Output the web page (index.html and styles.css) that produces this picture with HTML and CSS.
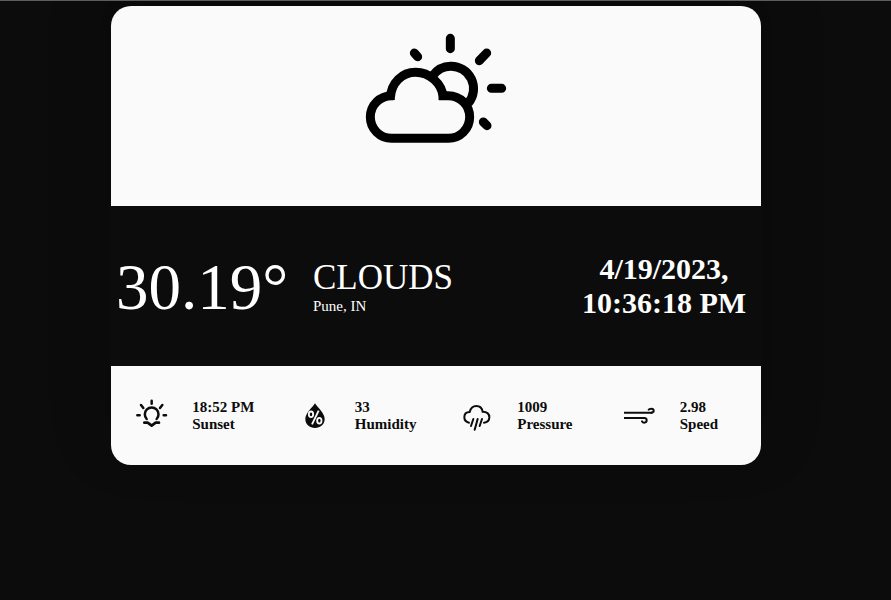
FILE: index.html
```html
<!DOCTYPE html>
<html lang="en">
<head>
<meta charset="utf-8">
<title>Weather</title>
<link rel="stylesheet" href="styles.css">
</head>
<body>
<article class="widget">
  <div class="weather-icon">
    <svg width="170" height="140" viewBox="0 0 510 420" fill="none" stroke="#000" stroke-width="27">
      <path d="M250 165A67 67 0 0 1 301 139A67 67 0 0 1 355 249"/>
      <path d="M131 227H125A64 64 0 0 0 125 355H295A64 64 0 0 0 295 227H267"/>
      <path d="M121 240V233C124 188 156 157 197 157S276 190 279 230V240"/>
      <path stroke-linecap="round" d="M301 55V86M388 122L410 99M424 205H455M193 99L203 110M400 306L411 317"/>
    </svg>
  </div>
  <div class="weather-info">
    <div class="temperature">30.19°</div>
    <div class="description">
      <div class="condition">CLOUDS</div>
      <div class="place">Pune, IN</div>
    </div>
    <div class="date">4/19/2023, 10:36:18 PM</div>
  </div>
  <div class="extra">
    <div class="item">
      <svg class="sunset" width="34" height="34" viewBox="0 0 102 102" fill="none" stroke="#0c0c0c" stroke-width="7.5" stroke-linecap="round">
        <path d="M35 66A20.500 20.500 0 1 1 65 66M50 11V20M18 24L25 33M82 24L75 33M7 55H14M86 55H93"/>
        <path stroke-width="8" stroke-linejoin="round" d="M28 77H38L50 86L62 77H72"/>
      </svg>
      <p>18:52 PM<br>Sunset</p>
    </div>
    <div class="item">
      <svg class="humidity" width="20" height="26" viewBox="0 0 60 78">
        <path fill="#0c0c0c" d="M30 1C22 14 1 31 1 48C1 64 14 75 30 75S59 64 59 48C59 31 38 14 30 1Z"/>
        <g fill="none" stroke="#fafafa" stroke-width="5.500"><ellipse cx="18" cy="34" rx="6.500" ry="8.500"/><ellipse cx="43" cy="53" rx="6.500" ry="8.500"/><path d="M41 23L21 64"/></g>
      </svg>
      <p>33<br>Humidity</p>
    </div>
    <div class="item">
      <svg class="pressure" width="30" height="30" viewBox="0 0 90 90" fill="none" stroke="#0c0c0c" stroke-width="6" stroke-linecap="round">
        <path d="M21 62C12 60 7 54 7 46C7 36 13 30 23 30C26 18 33 12 43 12C53 12 60 18 62 29C75 29 82 36 82 46C82 55 76 61 66 62M34 51L27 72M47 51L38 83M60 51L53 72"/>
      </svg>
      <p>1009<br>Pressure</p>
    </div>
    <div class="item">
      <svg class="wind" width="34" height="20" viewBox="0 0 102 60" fill="none" stroke="#0c0c0c" stroke-width="6" stroke-linecap="square">
        <path d="M9 23H88"/><path d="M9 39H66"/>
        <path stroke-linecap="round" d="M88 23C98 23 97 11 88 11C84 11 81 12 80 14M66 39C77 39 76 53 67 53C63 53 61 51 60 49"/>
      </svg>
      <p>2.98<br>Speed</p>
    </div>
  </div>
</article>
</body>
</html>
```
FILE: styles.css
```css
* { box-sizing: border-box; }

body {
  margin: 0;
  height: 600px;
  padding: 5px 19px 0 0;
  border-top: 1px solid #5c5e5d;
  background: #0c0c0c;
  font-family: "Liberation Serif", "Times New Roman", serif;
}

.widget {
  width: 650px;
  height: 459px;
  margin: 0 auto;
  overflow: hidden;
  border-radius: 20px;
  background: #fafafa;
  box-shadow: 0 -25px 60px rgba(0, 0, 0, 0.25);
}

.weather-icon {
  height: 200px;
  padding: 14px 0 0 239px;
}

svg { display: block; }

.weather-info {
  display: flex;
  align-items: center;
  height: 160px;
  background: #0c0c0c;
  color: #fff;
}

.temperature {
  width: 202px;
  padding: 2px 0 0 5px;
  font-size: 65px;
}

.description { width: 254px; padding-top: 1px; }
.condition { font-size: 35px; line-height: 40px; }
.place { font-size: 15px; line-height: 17px; }

.date {
  width: 194px;
  padding: 0 10px;
  font-size: 30px;
  font-weight: bold;
  line-height: 34px;
  text-align: center;
}

.extra {
  display: grid;
  grid-template-columns: repeat(4, 1fr);
  height: 99px;
}

.item {
  display: grid;
  grid-template-columns: 81.25px 1fr;
  align-items: center;
  justify-items: center;
  color: #0c0c0c;
}

.item p {
  justify-self: start;
  margin: 0;
  font-size: 15px;
  font-weight: bold;
  line-height: 17px;
}

.sunset { margin-bottom: 3px; }
.humidity { margin-left: 1px; }
.pressure { margin-top: 2px; }
.wind { margin: 0 0 1px; }
```
